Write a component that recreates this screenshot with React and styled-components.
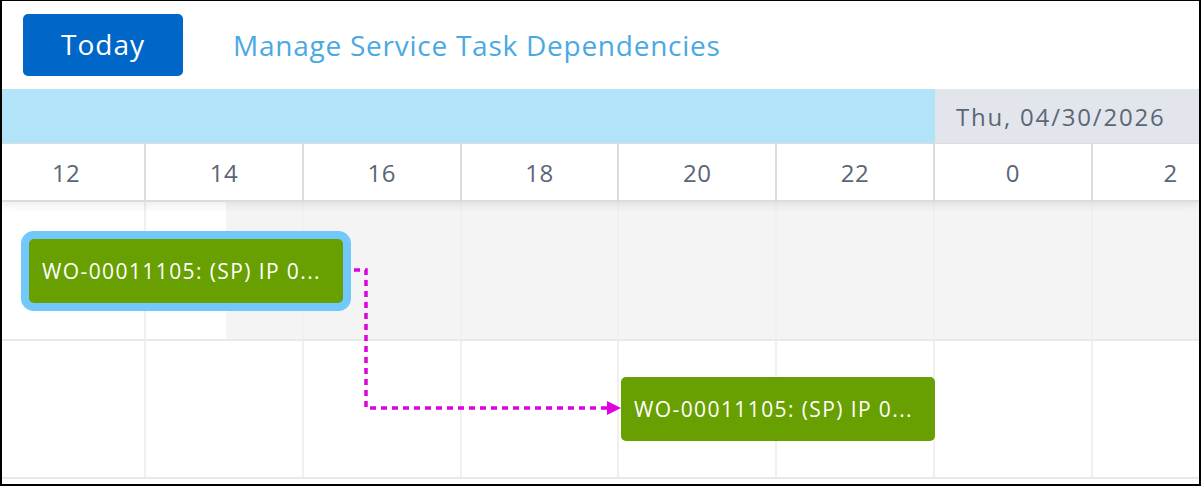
import React from "react";
import styled, { createGlobalStyle } from "styled-components";

const COL = 157.8;
const TRACK_SHIFT = -13.8;
const FONT = `"Open Sans", "Liberation Sans", sans-serif`;

const GlobalStyle = createGlobalStyle`
  html, body {
    margin: 0;
    padding: 0;
    background: #fff;
  }
  body {
    font-family: ${FONT};
  }
`;

const Frame = styled.div`
  box-sizing: border-box;
  width: 1201px;
  height: 486px;
  border-style: solid;
  border-color: #000;
  border-width: 1px 2px 2px 2px;
  overflow: hidden;
  display: flex;
  flex-direction: column;
  background: #fff;
`;

const Toolbar = styled.div`
  height: 88px;
  display: flex;
  align-items: center;
  gap: 50px;
  padding-left: 21px;
  padding-bottom: 1px;
  box-sizing: border-box;
`;

const TodayButton = styled.button`
  width: 160px;
  height: 62px;
  border: none;
  border-radius: 5px;
  background: #0067c8;
  color: #fff;
  font-family: ${FONT};
  font-size: 28px;
  letter-spacing: 1px;
  padding: 0 0 2px;
  cursor: pointer;
`;

const LinkText = styled.a`
  color: #4aa9e3;
  font-size: 28px;
  letter-spacing: 0.75px;
  text-decoration: none;
  cursor: pointer;
`;

const Scheduler = styled.div`
  flex: 1;
  display: flex;
  flex-direction: column;
  overflow: hidden;
`;

const Header = styled.div`
  position: relative;
  z-index: 2;
  box-shadow: 0 4px 8px rgba(0, 0, 0, 0.07);
`;

const Track = styled.div`
  margin-left: ${TRACK_SHIFT}px;
  display: grid;
  grid-template-columns: repeat(8, ${COL}px);
`;

const DayRow = styled(Track)`
  height: 55px;
  border-bottom: 1px solid #dcdcdc;
  box-sizing: border-box;
`;

const DayCell = styled.div`
  grid-column: span ${p => p.$span};
  background: ${p => (p.$current ? "#e2e6ec" : "#b3e3f9")};
  display: flex;
  align-items: center;
  padding-left: 21px;
  color: #5c6776;
  font-size: 24px;
  letter-spacing: 1.8px;
  white-space: nowrap;
`;

const HourRow = styled(Track)`
  height: 58px;
  border-bottom: 2px solid #dcdcdc;
  box-sizing: border-box;
`;

const HourCell = styled.div`
  border-right: 2px solid #dcdcdc;
  display: flex;
  align-items: center;
  justify-content: center;
  color: #5a6577;
  font-size: 24px;
  letter-spacing: 0.5px;
`;

const Body = styled.div`
  position: relative;
`;

const Lane = styled.div`
  position: relative;
  height: ${p => p.$h}px;
  border-bottom: 2px solid #e9e9e9;
  overflow: hidden;
`;

const LaneGrid = styled(Track)`
  height: 100%;
`;

const LaneCell = styled.div`
  border-right: 2px solid #f0f0f0;
`;

const Shade = styled.div`
  position: absolute;
  top: 0;
  bottom: 0;
  right: 0;
  left: ${p => p.$from}px;
  background: #f4f4f4;
  z-index: 0;
`;

const GridLayer = styled.div`
  position: absolute;
  inset: 0;
  z-index: 1;
`;

const Bar = styled.div`
  position: absolute;
  z-index: 2;
  width: 314px;
  height: 64px;
  box-sizing: border-box;
  background: #67a000;
  border-radius: 5px;
  color: #fff;
  font-size: 21px;
  letter-spacing: 1.4px;
  display: flex;
  align-items: center;
  padding: 0 13px;
  white-space: nowrap;
  overflow: hidden;
  box-shadow: ${p => (p.$selected ? "0 0 0 8px #72c8fb" : "none")};
`;

const BarText = styled.span`
  overflow: hidden;
  text-overflow: ellipsis;
`;

const Links = styled.svg`
  position: absolute;
  top: 0;
  left: 0;
  z-index: 3;
  pointer-events: none;
`;

const hours = [12, 14, 16, 18, 20, 22, 0, 2];

const lanes = [
  { h: 137, shadeFrom: 224, bar: { left: 27, top: 37, selected: true } },
  { h: 136, bar: { left: 619, top: 36 } },
];

function LaneRow({ lane }) {
  return (
    <Lane $h={lane.h}>
      {lane.shadeFrom != null && <Shade $from={lane.shadeFrom} />}
      <GridLayer>
        <LaneGrid>
          {hours.map(h => (
            <LaneCell key={h} />
          ))}
        </LaneGrid>
      </GridLayer>
      <Bar
        $selected={lane.bar.selected}
        style={{ left: lane.bar.left, top: lane.bar.top }}
      >
        <BarText>WO-00011105: (SP) IP 0...</BarText>
      </Bar>
    </Lane>
  );
}

export default function App() {
  return (
    <>
      <GlobalStyle />
      <Frame>
        <Toolbar>
          <TodayButton>Today</TodayButton>
          <LinkText>Manage Service Task Dependencies</LinkText>
        </Toolbar>
        <Scheduler>
          <Header>
            <DayRow>
              <DayCell $span={6} />
              <DayCell $span={2} $current>
                Thu, 04/30/2026
              </DayCell>
            </DayRow>
            <HourRow>
              {hours.map(h => (
                <HourCell key={h}>{h}</HourCell>
              ))}
            </HourRow>
          </Header>
          <Body>
            {lanes.map((lane, i) => (
              <LaneRow key={i} lane={lane} />
            ))}
            <Links width="1197" height="280">
              <path
                d="M352 68 H364 V206 H606"
                fill="none"
                stroke="#e000e0"
                strokeWidth="3.5"
                strokeDasharray="6 5"
              />
              <polygon points="605,199 619,206 605,213" fill="#e000e0" />
            </Links>
          </Body>
        </Scheduler>
      </Frame>
    </>
  );
}
